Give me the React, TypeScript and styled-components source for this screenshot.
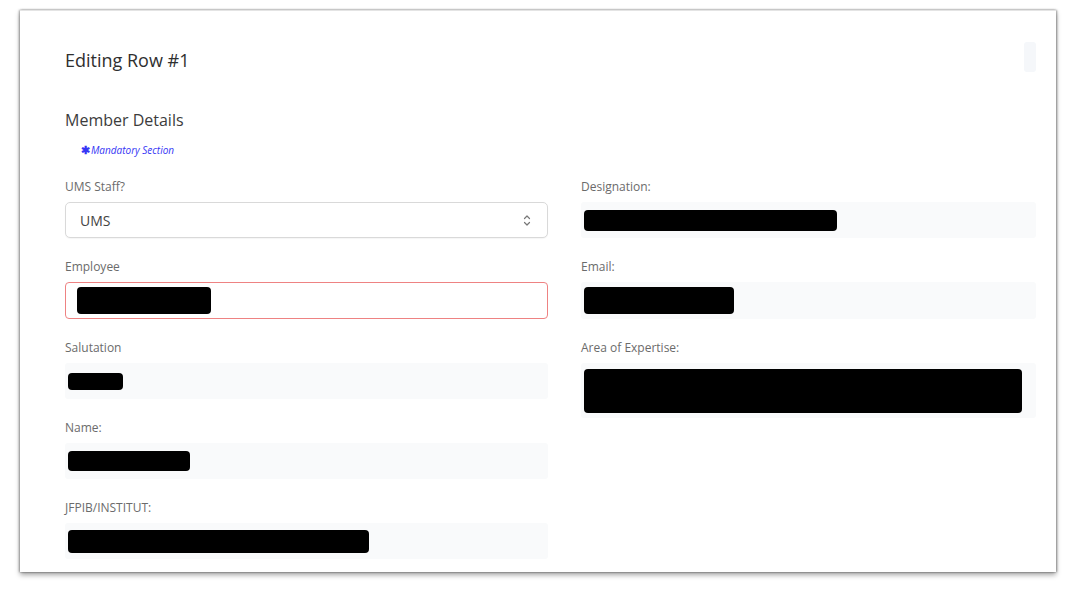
import React from "react";
import styled, { createGlobalStyle } from "styled-components";

const Global = createGlobalStyle`
  html, body { margin: 0; padding: 0; background: #ffffff; }
  body { font-family: "Open Sans", "Liberation Sans", sans-serif; }
  * { box-sizing: border-box; }
`;

const Page = styled.div`
  width: 1078px;
  height: 592px;
  padding: 10px 0 0 20px;
  background: #ffffff;
`;

const Card = styled.div`
  width: 1036px;
  height: 562px;
  background: #ffffff;
  border-top: 1px solid #e4e4e4;
  box-shadow: 0 3px 5px rgba(0, 0, 0, 0.35), 1px 0 2px rgba(0, 0, 0, 0.35), -1px 0 2px rgba(0, 0, 0, 0.3);
  padding: 34px 20px 0 45px;
  overflow: hidden;
  display: flex;
  flex-direction: column;
`;

const Header = styled.div`
  height: 30px;
  display: flex;
  align-items: center;
  justify-content: space-between;
`;

const Title = styled.h1`
  margin: 0;
  font-size: 18px;
  font-weight: 400;
  color: #2f2f2f;
  line-height: 24px;
`;

const GhostButton = styled.div`
  width: 12px;
  height: 30px;
  margin-top: -6px;
  background: #f5f7fa;
  border-radius: 3px;
`;

const SectionTitle = styled.h2`
  margin: 35px 0 0 0;
  font-size: 16px;
  font-weight: 400;
  color: #3c3c3c;
  line-height: 20px;
`;

const Mandatory = styled.div`
  margin: 13px 0 0 16px;
  font-size: 10px;
  line-height: 14px;
  font-style: italic;
  color: #3636f5;
  display: flex;
  align-items: center;
`;

const Star = styled.span`
  font-style: normal;
  font-weight: 700;
  font-size: 11px;
  margin-right: 1px;
`;

const Columns = styled.div`
  margin-top: 22px;
  display: flex;
  gap: 33px;
`;

const Column = styled.div<{ $w: number }>`
  width: ${(p) => p.$w}px;
  display: flex;
  flex-direction: column;
  gap: 21px;
`;

const Field = styled.div`
  display: flex;
  flex-direction: column;
  gap: 7px;
`;

const Label = styled.label`
  font-size: 12px;
  line-height: 16px;
  color: #6b6b6b;
`;

const SelectBox = styled.div`
  height: 36px;
  border: 1px solid #d9d9d9;
  border-radius: 5px;
  background: #fff;
  display: flex;
  align-items: center;
  justify-content: space-between;
  padding: 0 16px 0 14px;
  font-size: 14px;
  color: #444;
  box-shadow: 0 1px 1px rgba(0, 0, 0, 0.04);
`;

const Input = styled.div`
  height: 37px;
  border: 1px solid #ee8282;
  border-radius: 4px;
  background: #fff;
  display: flex;
  align-items: center;
  padding-left: 11px;
`;

const ReadOnly = styled.div<{ $h?: number }>`
  height: ${(p) => p.$h ?? 36}px;
  background: #f9fafb;
  border-radius: 3px;
  display: flex;
  align-items: center;
  padding-left: 3px;
`;

const Redact = styled.span<{ $w: number; $h: number }>`
  display: block;
  width: ${(p) => p.$w}px;
  height: ${(p) => p.$h}px;
  background: #000;
  border-radius: 4px;
`;

const Chevrons = () => (
  <svg width="8" height="13" viewBox="0 0 8 13" fill="none" stroke="#777" strokeWidth="1.2" strokeLinecap="round" strokeLinejoin="round">
    <path d="M1.5 4.5 L4 2 L6.5 4.5" />
    <path d="M1.5 8.5 L4 11 L6.5 8.5" />
  </svg>
);

export default function App() {
  return (
    <>
      <Global />
      <Page>
        <Card>
          <Header>
            <Title>Editing Row #1</Title>
            <GhostButton />
          </Header>
          <SectionTitle>Member Details</SectionTitle>
          <Mandatory>
            <Star>✱</Star>Mandatory Section
          </Mandatory>
          <Columns>
            <Column $w={483}>
              <Field>
                <Label>UMS Staff?</Label>
                <SelectBox>
                  <span>UMS</span>
                  <Chevrons />
                </SelectBox>
              </Field>
              <Field>
                <Label>Employee</Label>
                <Input>
                  <Redact $w={134} $h={27} />
                </Input>
              </Field>
              <Field>
                <Label>Salutation</Label>
                <ReadOnly>
                  <Redact $w={55} $h={17} />
                </ReadOnly>
              </Field>
              <Field>
                <Label>Name:</Label>
                <ReadOnly>
                  <Redact $w={122} $h={20} />
                </ReadOnly>
              </Field>
              <Field>
                <Label>JFPIB/INSTITUT:</Label>
                <ReadOnly>
                  <Redact $w={301} $h={23} />
                </ReadOnly>
              </Field>
            </Column>
            <Column $w={455}>
              <Field>
                <Label>Designation:</Label>
                <ReadOnly>
                  <Redact $w={253} $h={21} />
                </ReadOnly>
              </Field>
              <Field>
                <Label>Email:</Label>
                <ReadOnly $h={37}>
                  <Redact $w={150} $h={27} />
                </ReadOnly>
              </Field>
              <Field>
                <Label>Area of Expertise:</Label>
                <ReadOnly $h={55}>
                  <Redact $w={438} $h={44} />
                </ReadOnly>
              </Field>
            </Column>
          </Columns>
        </Card>
      </Page>
    </>
  );
}
